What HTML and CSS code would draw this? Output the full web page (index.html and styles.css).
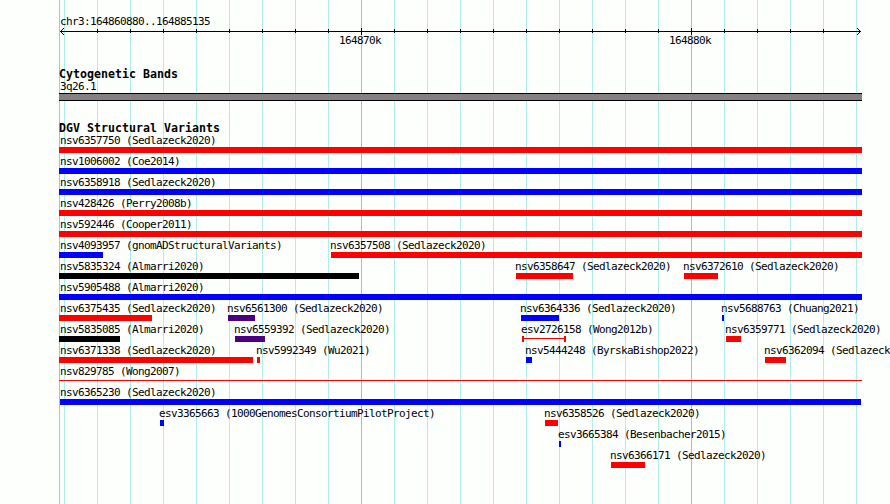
FILE: index.html
```
<!DOCTYPE html>
<html lang="en">
<head>
<meta charset="utf-8">
<title>chr3:164860880..164885135</title>
<link rel="stylesheet" href="styles.css">
</head>
<body>
<main class="panel">
  <section class="ruler">
    <div class="label">chr3:164860880..164885135</div>
    <svg class="axis" width="803" height="9" shape-rendering="crispEdges">
      <rect x="1" y="4" width="801" height="1"/>
      <path d="M2 3h1v1h-1zM3 2h1v1h-1zM4 1h1v1h-1zM2 5h1v1h-1zM3 6h1v1h-1zM4 7h1v1h-1z"/>
      <path d="M800 3h1v1h-1zM799 2h1v1h-1zM798 1h1v1h-1zM800 5h1v1h-1zM799 6h1v1h-1zM798 7h1v1h-1z"/>
      <path d="M38 2h1v4h-1zM71 2h1v4h-1zM104 2h1v4h-1zM137 2h1v4h-1zM170 2h1v4h-1zM203 2h1v4h-1zM236 2h1v4h-1zM269 2h1v4h-1zM302 1h1v7h-1zM335 2h1v4h-1zM368 2h1v4h-1zM401 2h1v4h-1zM434 2h1v4h-1zM467 2h1v4h-1zM500 2h1v4h-1zM533 2h1v4h-1zM566 2h1v4h-1zM599 2h1v4h-1zM632 1h1v7h-1zM665 2h1v4h-1zM698 2h1v4h-1zM731 2h1v4h-1zM764 2h1v4h-1z"/>
    </svg>
    <div class="scale"><span class="label">164870k</span><span class="label">164880k</span></div>
  </section>

  <section class="cytobands">
    <h2>Cytogenetic Bands</h2>
    <div class="label">3q26.1</div>
    <div class="band"></div>
  </section>

  <section class="variants">
    <h2>DGV Structural Variants</h2>
    <div class="lane"><div class="feature full"><span class="label">nsv6357750 (Sedlazeck2020)</span><i class="bar red"></i></div></div>
    <div class="lane"><div class="feature full"><span class="label">nsv1006002 (Coe2014)</span><i class="bar blue"></i></div></div>
    <div class="lane"><div class="feature full"><span class="label">nsv6358918 (Sedlazeck2020)</span><i class="bar blue"></i></div></div>
    <div class="lane"><div class="feature full"><span class="label">nsv428426 (Perry2008b)</span><i class="bar red"></i></div></div>
    <div class="lane"><div class="feature full"><span class="label">nsv592446 (Cooper2011)</span><i class="bar red"></i></div></div>
    <div class="lane">
      <div class="feature edge" style="--start:0px;--len:44px"><span class="label">nsv4093957 (gnomADStructuralVariants)</span><i class="bar blue"></i></div>
      <div class="feature" style="--start:272px;--len:531px"><span class="label">nsv6357508 (Sedlazeck2020)</span><i class="bar red"></i></div>
    </div>
    <div class="lane">
      <div class="feature edge" style="--start:0px;--len:300px"><span class="label">nsv5835324 (Almarri2020)</span><i class="bar black"></i></div>
      <div class="feature" style="--start:457px;--len:57px"><span class="label">nsv6358647 (Sedlazeck2020)</span><i class="bar red"></i></div>
      <div class="feature" style="--start:625px;--len:34px"><span class="label">nsv6372610 (Sedlazeck2020)</span><i class="bar red"></i></div>
    </div>
    <div class="lane"><div class="feature full"><span class="label">nsv5905488 (Almarri2020)</span><i class="bar blue"></i></div></div>
    <div class="lane">
      <div class="feature edge" style="--start:0px;--len:93px"><span class="label">nsv6375435 (Sedlazeck2020)</span><i class="bar red"></i></div>
      <div class="feature" style="--start:169px;--len:27px"><span class="label">nsv6561300 (Sedlazeck2020)</span><i class="bar purple"></i></div>
      <div class="feature" style="--start:462px;--len:38px"><span class="label">nsv6364336 (Sedlazeck2020)</span><i class="bar blue"></i></div>
      <div class="feature" style="--start:663px;--len:2px"><span class="label">nsv5688763 (Chuang2021)</span><i class="bar blue"></i></div>
    </div>
    <div class="lane">
      <div class="feature edge" style="--start:0px;--len:61px"><span class="label">nsv5835085 (Almarri2020)</span><i class="bar black"></i></div>
      <div class="feature" style="--start:176px;--len:30px"><span class="label">nsv6559392 (Sedlazeck2020)</span><i class="bar purple"></i></div>
      <div class="feature" style="--start:463px;--len:44px"><span class="label">esv2726158 (Wong2012b)</span><i class="bar range"></i></div>
      <div class="feature" style="--start:667px;--len:15px"><span class="label">nsv6359771 (Sedlazeck2020)</span><i class="bar red"></i></div>
    </div>
    <div class="lane">
      <div class="feature edge" style="--start:0px;--len:194px"><span class="label">nsv6371338 (Sedlazeck2020)</span><i class="bar red"></i></div>
      <div class="feature" style="--start:198px;--len:3px"><span class="label">nsv5992349 (Wu2021)</span><i class="bar red"></i></div>
      <div class="feature" style="--start:467px;--len:6px"><span class="label">nsv5444248 (ByrskaBishop2022)</span><i class="bar blue"></i></div>
      <div class="feature" style="--start:706px;--len:21px"><span class="label">nsv6362094 (Sedlazeck</span><i class="bar red"></i></div>
    </div>
    <div class="lane"><div class="feature full"><span class="label">nsv829785 (Wong2007)</span><i class="bar thin"></i></div></div>
    <div class="lane"><div class="feature inner" style="--start:1px;--len:801px"><span class="label">nsv6365230 (Sedlazeck2020)</span><i class="bar blue"></i></div></div>
    <div class="lane">
      <div class="feature" style="--start:101px;--len:4px"><span class="label">esv3365663 (1000GenomesConsortiumPilotProject)</span><i class="bar blue"></i></div>
      <div class="feature" style="--start:486px;--len:13px"><span class="label">nsv6358526 (Sedlazeck2020)</span><i class="bar red"></i></div>
    </div>
    <div class="lane"><div class="feature" style="--start:500px;--len:2px"><span class="label">esv3665384 (Besenbacher2015)</span><i class="bar blue"></i></div></div>
    <div class="lane"><div class="feature" style="--start:552px;--len:34px"><span class="label">nsv6366171 (Sedlazeck2020)</span><i class="bar red"></i></div></div>
  </section>
</main>
</body>
</html>
```
FILE: styles.css
```
body {
  margin: 0;
  height: 504px;
  overflow: hidden;
  background: #fdfffd;
  color: #000;
  font-family: "DejaVu Sans Mono", monospace;
}

/* Vertical rules every 1 kb, with darker ones every 10 kb */
.panel {
  box-sizing: border-box;
  width: 803px;
  height: 504px;
  margin-left: 59px;
  padding-top: 15px;
  background-image:
    linear-gradient(#87cefa, #87cefa),
    linear-gradient(#82cbe0, #82cbe0),
    linear-gradient(#82cbe0, #82cbe0),
    linear-gradient(to right, #afeeea 1px, transparent 1px);
  background-size: 1px 100%, 1px 100%, 1px 100%, 33px 100%;
  background-position: 0 0, 302px 0, 632px 0, 5px 0;
  background-repeat: no-repeat, no-repeat, no-repeat, repeat-x;
}

.label {
  display: block;
  height: 12px;
  margin-left: 1px;
  font-size: 11px;
  line-height: 13px;
  letter-spacing: -0.622px;
  white-space: pre;
}

.axis {
  display: block;
}

.ruler {
  height: 53px;
}

.scale {
  display: flex;
  gap: 288px;
  margin-left: 279px;
  margin-top: -2px;
}

.scale .label {
  width: 42px;
  margin: 0;
}

.scale .label:first-child {
  margin-left: 1px;
}

h2 {
  height: 12px;
  margin: 0;
  font-size: 11.6px;
  font-weight: bold;
  line-height: 12px;
  letter-spacing: 0.016px;
  white-space: pre;
}

.cytobands {
  height: 54px;
}

.band {
  box-sizing: border-box;
  height: 8px;
  margin-top: 1px;
  border: solid #000;
  border-width: 1px 0;
  background: #848084;
}

/* Features share one grid cell so that each one is offset from the lane's start */
.lane {
  display: grid;
  grid-template-columns: 803px;
  height: 21px;
}

.feature {
  --start: 0px;
  --len: 803px;
  grid-area: 1 / 1;
  width: var(--len);
  margin-left: var(--start);
}

.feature .label {
  margin-left: -1px;
}

.full .label,
.edge .label {
  margin-left: 1px;
}

.inner .label {
  margin-left: 0;
}

.bar {
  display: block;
  height: 6px;
  margin-top: 1px;
}

.red { background: #f00; }
.blue { background: #00f; }
.black { background: #000; }
.purple { background: #4b0082; }

.thin {
  height: 1px;
  margin-top: 3px;
  background: #f00;
}

.range {
  box-sizing: border-box;
  border: solid #f00;
  border-width: 0 2px;
  background: linear-gradient(#f00, #f00) 0 2px / 100% 1px no-repeat;
}
```
